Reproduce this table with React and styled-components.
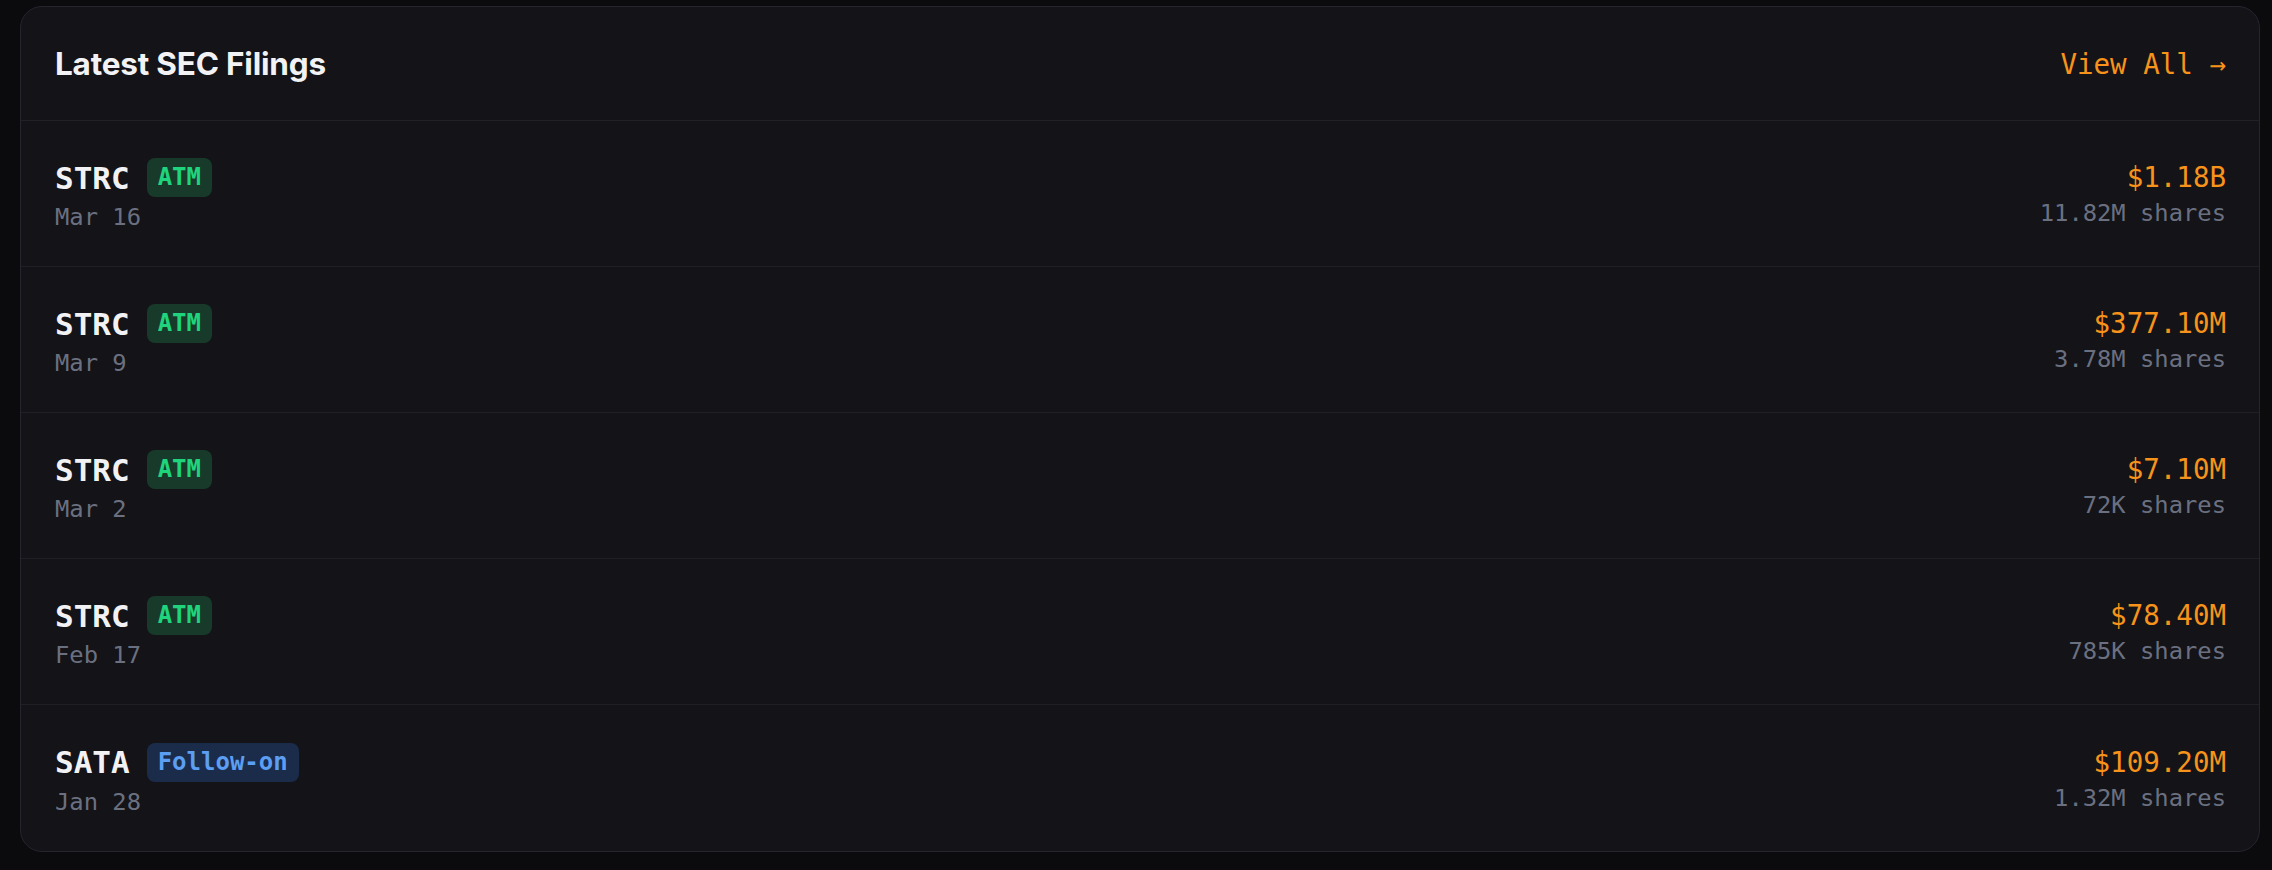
import React from "react";
import styled, { createGlobalStyle } from "styled-components";

const Global = createGlobalStyle`
  html, body { margin: 0; padding: 0; background: #0b0b0e; }
  * { box-sizing: border-box; }
`;

const Page = styled.div`
  padding: 6px 12px 18px 20px;
  background: #0b0b0e;
  min-height: 870px;
`;

const Card = styled.section`
  background: #131318;
  border: 1px solid #25252d;
  border-radius: 22px;
  overflow: hidden;
`;

const Header = styled.header`
  display: flex;
  align-items: center;
  justify-content: space-between;
  height: 114px;
  padding: 0 33px 0 34px;
  border-bottom: 1px solid #212128;
`;

const Title = styled.h2`
  margin: 0;
  font-family: Inter, "Noto Sans", sans-serif;
  font-weight: 700;
  font-size: 31.5px;
  color: #f2f2f4;
  letter-spacing: -0.2px;
`;

const ViewAll = styled.a`
  font-family: "DejaVu Sans Mono", "Liberation Mono", monospace;
  font-size: 27.5px;
  font-weight: 500;
  color: #f7931a;
  text-decoration: none;
  cursor: pointer;
`;

const Row = styled.div`
  display: flex;
  align-items: center;
  justify-content: space-between;
  height: 146px;
  padding: 0 33px 0 34px;
  border-bottom: ${(p) => (p.$last ? "none" : "1px solid #1f1f26")};
`;

const Left = styled.div`
  display: flex;
  flex-direction: column;
  gap: 2px;
  padding-top: 6px;
`;

const TickerLine = styled.div`
  display: flex;
  align-items: center;
  gap: 17px;
  height: 39px;
`;

const Ticker = styled.span`
  font-family: "DejaVu Sans Mono", "Liberation Mono", monospace;
  font-weight: 700;
  font-size: 31px;
  color: #f2f2f4;
`;

const Badge = styled.span`
  font-family: "DejaVu Sans Mono", "Liberation Mono", monospace;
  font-weight: 700;
  font-size: 24px;
  line-height: 27px;
  padding: 6px 11px;
  border-radius: 8px;
  color: ${(p) => (p.$kind === "atm" ? "#1fd47c" : "#5b9ef2")};
  background: ${(p) => (p.$kind === "atm" ? "#183a2a" : "#1b2b4a")};
`;

const Muted = styled.span`
  font-family: "DejaVu Sans Mono", "Liberation Mono", monospace;
  font-size: 23.8px;
  color: #6b7080;
  line-height: ${(p) => p.$lh || "36px"};
`;

const Right = styled.div`
  display: flex;
  flex-direction: column;
  align-items: flex-end;
`;

const Value = styled.span`
  font-family: "DejaVu Sans Mono", "Liberation Mono", monospace;
  font-size: 27.5px;
  line-height: 39px;
  color: #f7931a;
`;

const filings = [
  { t: "STRC", k: "atm", b: "ATM", d: "Mar 16", v: "$1.18B", s: "11.82M shares" },
  { t: "STRC", k: "atm", b: "ATM", d: "Mar 9", v: "$377.10M", s: "3.78M shares" },
  { t: "STRC", k: "atm", b: "ATM", d: "Mar 2", v: "$7.10M", s: "72K shares" },
  { t: "STRC", k: "atm", b: "ATM", d: "Feb 17", v: "$78.40M", s: "785K shares" },
  { t: "SATA", k: "fo", b: "Follow-on", d: "Jan 28", v: "$109.20M", s: "1.32M shares" },
];

export default function App() {
  return (
    <>
      <Global />
      <Page>
        <Card>
          <Header>
            <Title>Latest SEC Filings</Title>
            <ViewAll>View All →</ViewAll>
          </Header>
          {filings.map((f, i) => (
            <Row key={i} $last={i === filings.length - 1}>
              <Left>
                <TickerLine>
                  <Ticker>{f.t}</Ticker>
                  <Badge $kind={f.k}>{f.b}</Badge>
                </TickerLine>
                <Muted>{f.d}</Muted>
              </Left>
              <Right>
                <Value>{f.v}</Value>
                <Muted $lh="32px">{f.s}</Muted>
              </Right>
            </Row>
          ))}
        </Card>
      </Page>
    </>
  );
}
